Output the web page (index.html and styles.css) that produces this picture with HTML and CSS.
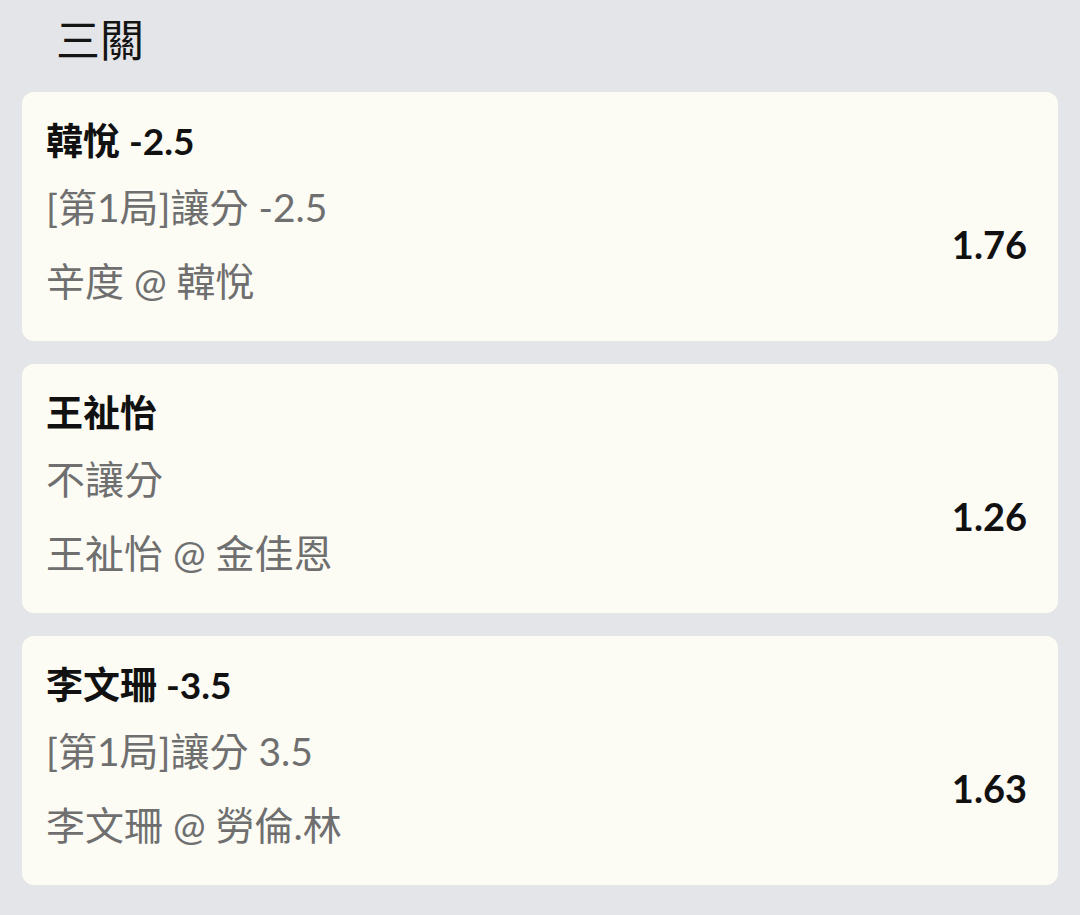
FILE: index.html
```html
<!DOCTYPE html>
<html lang="zh-Hant">
<head>
<meta charset="utf-8">
<link rel="stylesheet" href="styles.css">
</head>
<body>
<h1 class="heading">三關</h1>
<div class="list">
  <div class="card">
    <div class="title">韓悅 -2.5</div>
    <div class="row">
      <div class="details">
        <div class="line market">[第1局]讓分 -2.5</div>
        <div class="line match">辛度 @ 韓悅</div>
      </div>
      <div class="odds">1.76</div>
    </div>
  </div>
  <div class="card">
    <div class="title">王祉怡</div>
    <div class="row">
      <div class="details">
        <div class="line market">不讓分</div>
        <div class="line match">王祉怡 @ 金佳恩</div>
      </div>
      <div class="odds">1.26</div>
    </div>
  </div>
  <div class="card">
    <div class="title">李文珊 -3.5</div>
    <div class="row">
      <div class="details">
        <div class="line market">[第1局]讓分 3.5</div>
        <div class="line match">李文珊 @ 勞倫.林</div>
      </div>
      <div class="odds">1.63</div>
    </div>
  </div>
</div>
</body>
</html>
```
FILE: styles.css
```css
html, body {
  margin: 0;
  padding: 0;
}
body {
  background: #e4e5e8;
  font-family: Lato, "Noto Sans CJK TC", sans-serif;
  color: #111;
  width: 1080px;
  height: 915px;
  overflow: hidden;
}
.heading {
  margin: 0;
  padding: 12px 0 0 56px;
  height: 92px;
  box-sizing: border-box;
  font-size: 44px;
  font-weight: 400;
  line-height: 52px;
  font-family: "Noto Sans CJK TC", sans-serif;
  color: #141414;
}
.list {
  display: flex;
  flex-direction: column;
  gap: 23px;
  padding: 0 22px;
}
.card {
  background: #fcfcf5;
  border-radius: 12px;
  height: 249px;
  box-sizing: border-box;
  padding: 23px 31px 0 24px;
}
.title {
  font-size: 37px;
  font-weight: 700;
  line-height: 52px;
  height: 52px;
  color: #111;
}
.row {
  display: flex;
  align-items: center;
  justify-content: space-between;
  margin-top: 14px;
}
.details {
  display: flex;
  flex-direction: column;
  gap: 22px;
}
.line {
  font-family: Lato, "Noto Sans CJK TC", sans-serif;
  font-size: 39px;
  line-height: 52px;
  height: 52px;
  color: #6f6f6f;
  font-weight: 400;
}
.odds {
  font-size: 38px;
  font-weight: 700;
  line-height: 52px;
  color: #111;
}
```
